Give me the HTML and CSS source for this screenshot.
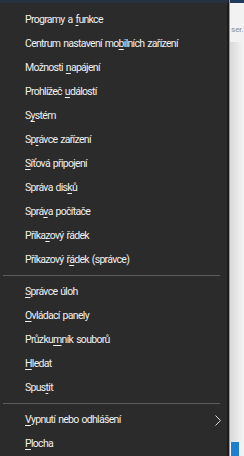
FILE: index.html
```html
<!DOCTYPE html>
<html lang="cs">
<head>
    <meta charset="UTF-8">
    <title>Win+X</title>
    <link rel="stylesheet" href="styles.css">
</head>
<body>
    <div class="menu">
        <div class="item">Programy a <u>f</u>unkce</div>
        <div class="item">Centrum nastavení mo<u>b</u>ilních zařízení</div>
        <div class="item">Možnosti <u>n</u>apájení</div>
        <div class="item">Prohlížeč <u>u</u>dálostí</div>
        <div class="item">S<u>y</u>stém</div>
        <div class="item">Sp<u>r</u>ávce zařízení</div>
        <div class="item"><u>S</u>íťová připojení</div>
        <div class="item">Správa dis<u>k</u>ů</div>
        <div class="item">Sprá<u>v</u>a počítače</div>
        <div class="item">Příka<u>z</u>ový řádek</div>
        <div class="item">Příkazový ř<u>á</u>dek (správce)</div>
        <div class="sep"></div>
        <div class="item"><u>S</u>právce úloh</div>
        <div class="item"><u>O</u>vládací panely</div>
        <div class="item">Průzku<u>m</u>ník souborů</div>
        <div class="item"><u>H</u>ledat</div>
        <div class="item">Spus<u>t</u>it</div>
        <div class="sep"></div>
        <div class="item sub">
            <span><u>V</u>ypnutí nebo odhlášení</span>
            <svg width="6" height="11" viewBox="0 0 6 11"><path d="M0.5 0.5 L5.5 5.5 L0.5 10.5" fill="none" stroke="#d8d8d8" stroke-width="1"/></svg>
        </div>
        <div class="item"><u>P</u>locha</div>
    </div>
    <div class="side">
        <div class="side-top"></div>
        <div class="side-text">ser.</div>
        <div class="side-fill"></div>
        <div class="side-icon"></div>
    </div>
</body>
</html>
```

FILE: styles.css
```css
* {
    margin: 0;
    padding: 0;
    box-sizing: border-box;
}

body {
    width: 244px;
    height: 456px;
    display: flex;
    overflow: hidden;
    background: #e6e6e6;
    font-family: Roboto, 'Noto Sans', sans-serif;
}

/* Context menu */
.menu {
    width: 229px;
    height: 456px;
    background: #2b2b2b;
    border-top: 3px solid #263242;
    border-right: 2px solid #1c1c1c;
    padding-top: 5px;
}

.item {
    height: 24px;
    line-height: 24px;
    padding-left: 25px;
    padding-right: 6px;
    color: #f0f0f0;
    font-size: 10.5px;
    letter-spacing: -0.7px;
    word-spacing: 1px;
    white-space: nowrap;
}

.item u {
    text-underline-offset: 2px;
}

.item.sub {
    display: flex;
    align-items: center;
    justify-content: space-between;
}

.sep {
    height: 1px;
    background: #5c5c5c;
    margin: 3px 7px 4px 3px;
}

/* Window behind the menu */
.side {
    flex: 1;
    display: flex;
    flex-direction: column;
    border-left: 1px solid #9a9a9a;
    background: #f2f2f2;
}

.side-top {
    height: 3px;
    background: #1f3a5a;
}

.side-text {
    margin-top: 22px;
    font-size: 8px;
    color: #8a8a8a;
    padding-left: 1px;
}

.side-fill {
    flex: 1;
    background: linear-gradient(to right, #d9d9d9, #f4f4f4);
    margin-top: 8px;
}

.side-icon {
    height: 14px;
    width: 8px;
    background: #1e7fd0;
    margin-left: 1px;
}
```
